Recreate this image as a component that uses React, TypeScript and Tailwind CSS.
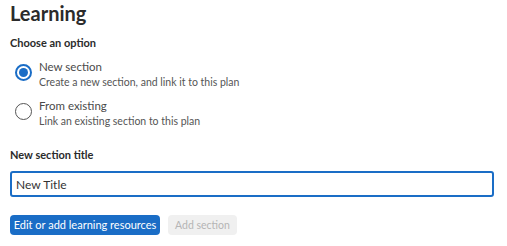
import { useState } from 'react'

const options = [
  { id: 'new', label: 'New section', hint: 'Create a new section, and link it to this plan' },
  { id: 'existing', label: 'From existing', hint: 'Link an existing section to this plan' },
]

export default function App() {
  const [choice, setChoice] = useState('new')
  const [title, setTitle] = useState('New Title')

  return (
    <div className="h-[246px] w-[507px] overflow-hidden bg-white px-[10px] pt-[1px] font-['Lato',sans-serif] text-[#333]">
      <h1 className="text-[20px] font-bold leading-[24px] text-[#2b2b2b]">Learning</h1>

      <div className="mt-[10px] text-[11px] font-bold leading-[16px] text-[#2b2b2b]">Choose an option</div>
      <div className="mt-[8px] flex flex-col gap-[9px]">
        {options.map((o) => {
          const active = choice === o.id
          return (
            <label key={o.id} className="flex cursor-pointer items-start gap-[7px] pl-[5px]">
              <input
                type="radio"
                name="choice"
                className="sr-only"
                checked={active}
                onChange={() => setChoice(o.id)}
              />
              <span
                className={
                  active
                    ? 'mt-[5px] flex size-[17px] shrink-0 items-center justify-center rounded-full border-2 border-[#1a6dc6] bg-white'
                    : 'mt-[5px] flex size-[17px] shrink-0 items-center justify-center rounded-full border-[1.5px] border-[#555] bg-white'
                }
              >
                {active && <span className="size-[9px] rounded-full bg-[#1a6dc6]" />}
              </span>
              <span className="flex flex-col">
                <span className="text-[11.5px] leading-[16px] text-[#4a4a4a]">{o.label}</span>
                <span className="text-[10.5px] leading-[14px] text-[#555]">{o.hint}</span>
              </span>
            </label>
          )
        })}
      </div>

      <label className="mt-[19px] block text-[11px] font-bold leading-[16px] text-[#2b2b2b]" htmlFor="title">
        New section title
      </label>
      <input
        id="title"
        value={title}
        onChange={(e) => setTitle(e.target.value)}
        className="mt-[8px] block h-[26px] w-[484px] rounded-[3px] border-2 border-[#1a6dc6] px-[4px] text-[12px] text-[#333] outline-none"
      />

      <div className="mt-[18px] flex gap-[8px]">
        <button className="h-[20px] w-[150px] whitespace-nowrap rounded-[4px] bg-[#1a6dc6] text-[11px] leading-[20px] text-white">
          Edit or add learning resources
        </button>
        <button
          disabled
          className="h-[20px] w-[69px] whitespace-nowrap rounded-[4px] bg-[#f0f0f0] text-[10.5px] leading-[20px] text-[#b5b5b5]"
        >
          Add section
        </button>
      </div>
    </div>
  )
}
